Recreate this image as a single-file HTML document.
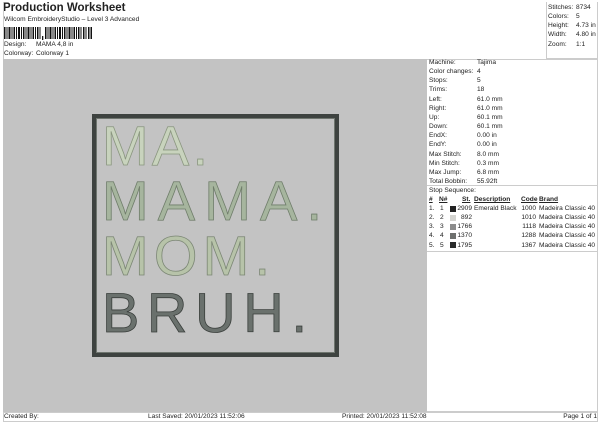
<!DOCTYPE html>
<html><head><meta charset="utf-8"><style>
*{margin:0;padding:0;box-sizing:border-box}
body{width:600px;height:424px;background:#fff;font-family:"Liberation Sans",sans-serif;color:#222;position:relative;overflow:hidden}
.a{position:absolute;white-space:nowrap}
.s{font-size:6.6px;line-height:9.15px}
</style></head><body>
<div class="a" style="left:3px;top:2px;font-size:11.5px;font-weight:bold;">Production Worksheet</div>
<div class="a s" style="left:4px;top:15px">Wilcom EmbroideryStudio – Level 3 Advanced</div>
<svg class="a" style="left:4px;top:27px" width="90" height="14">
<g fill="#111">
<rect x="0" y="0" width="1.5" height="12"/><rect x="2.5" y="0" width="1" height="12"/><rect x="4.5" y="0" width="2" height="12"/><rect x="7.5" y="0" width="1" height="12"/><rect x="9.5" y="0" width="1.5" height="12"/><rect x="12" y="0" width="1" height="12"/><rect x="14" y="0" width="2" height="12"/><rect x="17" y="0" width="1" height="12"/><rect x="19" y="0" width="1.5" height="12"/><rect x="21.5" y="0" width="1" height="12"/><rect x="23.5" y="0" width="2" height="12"/><rect x="26.5" y="0" width="1" height="12"/><rect x="28.5" y="0" width="1.5" height="12"/><rect x="31" y="0" width="1" height="12"/><rect x="33" y="0" width="1.5" height="12"/><rect x="35.5" y="0" width="1" height="12"/>
<rect x="38" y="9" width="1.3" height="4"/>
<rect x="41" y="0" width="1.5" height="12"/><rect x="43.5" y="0" width="1" height="12"/><rect x="45.5" y="0" width="2" height="12"/><rect x="48.5" y="0" width="1" height="12"/><rect x="50.5" y="0" width="1.5" height="12"/><rect x="53" y="0" width="1" height="12"/><rect x="55" y="0" width="2" height="12"/><rect x="58" y="0" width="1" height="12"/><rect x="60" y="0" width="1.5" height="12"/><rect x="62.5" y="0" width="1" height="12"/><rect x="64.5" y="0" width="2" height="12"/><rect x="67.5" y="0" width="1" height="12"/><rect x="69.5" y="0" width="1.5" height="12"/><rect x="72" y="0" width="1" height="12"/><rect x="74" y="0" width="1.5" height="12"/><rect x="76.5" y="0" width="1" height="12"/><rect x="79" y="0" width="1.5" height="12"/><rect x="81.5" y="0" width="1" height="12"/><rect x="84" y="0" width="1.5" height="12"/><rect x="86.5" y="0" width="1.5" height="12"/>
</g></svg>
<div class="a s" style="left:4px;top:40px">Design:</div><div class="a s" style="left:36px;top:40px">MAMA 4,8 in</div>
<div class="a s" style="left:4px;top:49px">Colorway:</div><div class="a s" style="left:36px;top:49px">Colorway 1</div>

<div class="a" style="left:3px;top:2px;width:595px;height:57px;border:1px solid #ccc;border-bottom:none;border-top:none"></div>
<div class="a" style="left:546px;top:2px;width:52px;height:57px;border-left:1px solid #ccc;border-bottom:1px solid #ccc"></div>
<div class="a s" style="left:548px;top:3px">Stitches:<br>Colors:<br>Height:<br>Width:<br>Zoom:</div>
<div class="a s" style="left:576px;top:3px">8734<br>5<br>4.73 in<br>4.80 in<br>1:1</div>

<div class="a" style="left:3px;top:59px;width:424px;height:353px;background:#c3c3c3"></div>
<div class="a" style="left:427px;top:59px;width:171px;height:353px;border:1px solid #ccc;border-left:none"></div>
<div class="a" style="left:427px;top:185px;width:171px;height:1px;background:#ccc"></div>
<div class="a" style="left:427px;top:251px;width:171px;height:1px;background:#ccc"></div>

<div class="a" style="left:92px;top:114px;width:247px;height:243px;border:4px solid #3e4340;box-shadow:inset 0 0 0 1px #6f766f"></div>
<svg class="a" style="left:0;top:0" width="430" height="412">
<g font-family="Liberation Sans, sans-serif" font-size="56" stroke-width="0.8">
<text x="102" y="165" textLength="106" lengthAdjust="spacing" fill="#c8d3bd" stroke="#8a967f">MA.</text>
<text x="102" y="220" textLength="220" lengthAdjust="spacing" fill="#a6b59e" stroke="#6f7d6a">MAMA.</text>
<text x="102" y="275" textLength="168" lengthAdjust="spacing" fill="#b7c3a9" stroke="#7c8775">MOM.</text>
<text x="102" y="332" textLength="205" lengthAdjust="spacing" fill="#6a716d" stroke="#3a3f3c">BRUH.</text>
</g></svg>

<div class="a s" style="left:429px;top:58px">Machine:<br>Color changes:<br>Stops:<br>Trims:<br>Left:<br>Right:<br>Up:<br>Down:<br>EndX:<br>EndY:<br>Max Stitch:<br>Min Stitch:<br>Max Jump:<br>Total Bobbin:</div>
<div class="a s" style="left:477px;top:58px">Tajima<br>4<br>5<br>18<br>61.0 mm<br>61.0 mm<br>60.1 mm<br>60.1 mm<br>0.00 in<br>0.00 in<br>8.0 mm<br>0.3 mm<br>6.8 mm<br>55.92ft</div>
<div class="a s" style="left:429px;top:186px">Stop Sequence:</div>
<div class="a s" style="left:429px;top:195px;font-weight:bold;text-decoration:underline">#</div>
<div class="a s" style="left:439px;top:195px;font-weight:bold;text-decoration:underline">N#</div>
<div class="a s" style="left:462px;top:195px;font-weight:bold;text-decoration:underline">St.</div>
<div class="a s" style="left:474px;top:195px;font-weight:bold;text-decoration:underline">Description</div>
<div class="a s" style="left:521px;top:195px;font-weight:bold;text-decoration:underline">Code</div>
<div class="a s" style="left:539px;top:195px;font-weight:bold;text-decoration:underline">Brand</div>
<div class="a s" style="left:429px;top:204px">1.<br>2.<br>3.<br>4.<br>5.</div>
<div class="a s" style="left:440px;top:204px">1<br>2<br>3<br>4<br>5</div>
<div class="a" style="left:450px;top:206px;width:6px;height:6px;background:#222"></div>
<div class="a" style="left:450px;top:215px;width:6px;height:6px;background:#d4d4d0"></div>
<div class="a" style="left:450px;top:224px;width:6px;height:6px;background:#8c8c8c"></div>
<div class="a" style="left:450px;top:233px;width:6px;height:6px;background:#6e706e"></div>
<div class="a" style="left:450px;top:242px;width:6px;height:6px;background:#2a2c2c"></div>
<div class="a s" style="left:457px;top:204px;width:15px;text-align:right">2909<br>892<br>1766<br>1370<br>1795</div>
<div class="a s" style="left:474px;top:204px">Emerald Black</div>
<div class="a s" style="left:519px;top:204px;width:17px;text-align:right">1000<br>1010<br>1118<br>1288<br>1367</div>
<div class="a s" style="left:539px;top:204px">Madeira Classic 40<br>Madeira Classic 40<br>Madeira Classic 40<br>Madeira Classic 40<br>Madeira Classic 40</div>

<div class="a" style="left:3px;top:412px;width:595px;height:10px;border:1px solid #ccc"></div>
<div class="a s" style="left:4px;top:412px">Created By:</div>
<div class="a s" style="left:148px;top:412px">Last Saved: 20/01/2023 11:52:06</div>
<div class="a s" style="left:342px;top:412px">Printed: 20/01/2023 11:52:08</div>
<div class="a s" style="left:555px;top:412px;width:42px;text-align:right">Page 1 of 1</div>
</body></html>
